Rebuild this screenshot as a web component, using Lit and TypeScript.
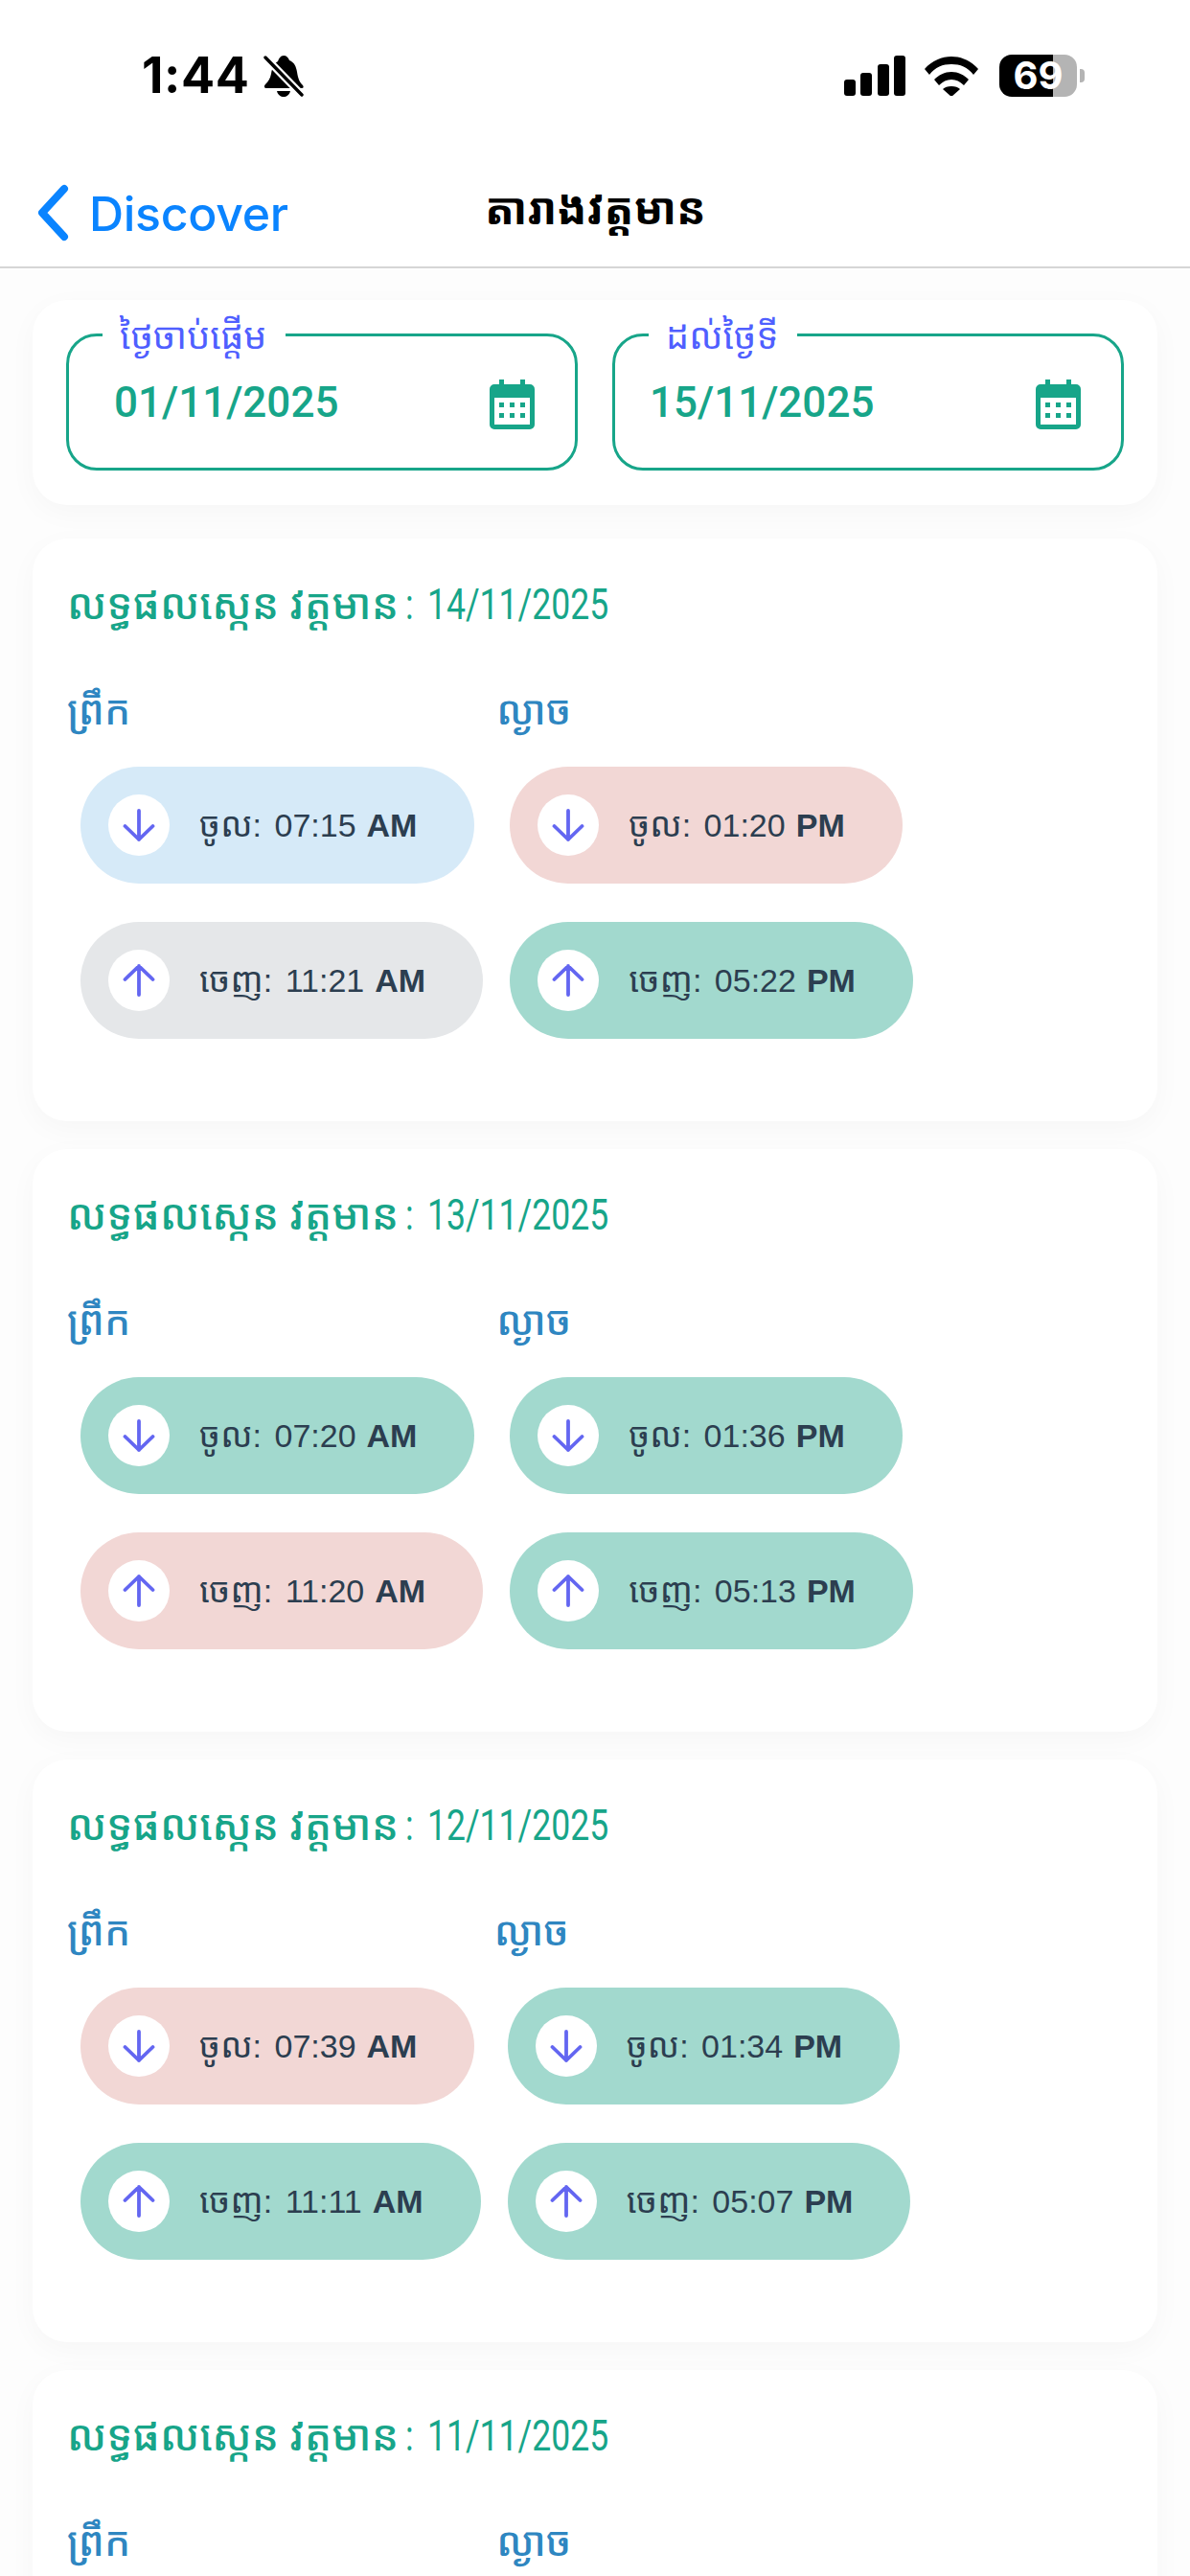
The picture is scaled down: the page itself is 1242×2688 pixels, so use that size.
import { LitElement, html, css, svg } from "lit";
import { customElement } from "lit/decorators.js";

type Tone = "pink" | "green" | "blue" | "gray";
interface Stamp { time: string; mer: string; tone: Tone; }
interface Day { date: string; am: [Stamp, Stamp]; pm: [Stamp, Stamp]; }

const s = (time: string, mer: string, tone: Tone): Stamp => ({ time, mer, tone });
const days: Day[] = [
  { date: "14/11/2025", am: [s("07:15", "AM", "blue"), s("11:21", "AM", "gray")], pm: [s("01:20", "PM", "pink"), s("05:22", "PM", "green")] },
  { date: "13/11/2025", am: [s("07:20", "AM", "green"), s("11:20", "AM", "pink")], pm: [s("01:36", "PM", "green"), s("05:13", "PM", "green")] },
  { date: "12/11/2025", am: [s("07:39", "AM", "pink"), s("11:11", "AM", "green")], pm: [s("01:34", "PM", "green"), s("05:07", "PM", "green")] },
  { date: "11/11/2025", am: [s("07:20", "AM", "green"), s("11:20", "AM", "green")], pm: [s("01:30", "PM", "green"), s("05:10", "PM", "green")] },
];

const calendar = svg`<svg class="cal" viewBox="0 0 47 52"><path fill-rule="evenodd" d="M10 0h5v5h17V0h5v5h5a5 5 0 0 1 5 5v37a5 5 0 0 1-5 5H5a5 5 0 0 1-5-5V10a5 5 0 0 1 5-5h5zM5 19v28h37V19zM10 24h5v5h-5zM21 24h5v5h-5zM32 24h5v5h-5zM10 35h5v5h-5zM21 35h5v5h-5zM32 35h5v5h-5z"/></svg>`;

@customElement("app-root")
export class AppRoot extends LitElement {
  static styles = css`
    :host { display: block; width: 1242px; height: 2688px; overflow: hidden; background: #fdfdfd; font-family: "Liberation Sans", "Noto Sans", sans-serif; }
    .head { background: #fff; height: 278px; display: flex; flex-direction: column; border-bottom: 2px solid #d6d6d6; box-sizing: content-box; }
    .status { height: 160px; display: flex; align-items: flex-start; padding: 57px 109px 0 148px; box-sizing: border-box; }
    .time { font: 700 52px/44px Inter, sans-serif; color: #000; letter-spacing: .6px; }
    .bell { width: 44px; height: 44px; margin-left: 13px; }
    .spacer { flex: 1; }
    .signal { width: 64px; height: 42px; margin-top: 1px; }
    .wifi { width: 56px; height: 42px; margin: 1px 22px 0 20px; }
    .battery { width: 90px; height: 44px; display: flex; align-items: center; }
    .cell { width: 81px; height: 44px; border-radius: 13px; background: linear-gradient(90deg, #000 69%, #b4b4b4 69%); color: #fff; font: 700 40px/44px Inter, sans-serif; text-align: center; }
    .nub { width: 5px; height: 14px; margin-left: 3px; background: #b4b4b4; border-radius: 0 4px 4px 0; }
    .nav { display: flex; align-items: center; height: 118px; padding-left: 37px; position: relative; }
    .chev { width: 36px; height: 60px; margin-top: 6px; }
    .back { font: 500 50px/60px Inter, sans-serif; color: #0a84ff; margin-left: 20px; margin-top: 8px; letter-spacing: -.3px; }
    .title { position: absolute; left: 506px; top: 26px; font: 700 45.5px/60px "Noto Sans Khmer", Khmer, "Liberation Sans", sans-serif; color: #000; }
    main { padding: 33px 34px 0; display: flex; flex-direction: column; }
    .card { background: #fff; border-radius: 36px; box-shadow: 0 8px 30px rgba(0,0,0,.03); }
    .filter { height: 214px; padding: 35px; display: grid; grid-template-columns: 534px 534px; gap: 36px; box-sizing: border-box; margin-bottom: 35px; }
    .field { height: 143px; border: 3px solid #17a589; border-radius: 32px; box-sizing: border-box; position: relative; display: flex; justify-content: space-between; padding: 44px 42px 0 47px; }
    .field.b { padding-left: 36px; }
    .legend { position: absolute; left: 35px; top: -26px; background: #fff; padding: 0 20px 0 18px; font: 400 38px/48px "Noto Sans Khmer", Khmer, "Liberation Sans", sans-serif; color: #4f5fff; }
    .date { font: 500 44px/50px Roboto, sans-serif; color: #17a589; }
    .cal { width: 47px; height: 52px; fill: #17a589; margin-top: 1px; }
    .day { height: 608px; padding: 37px 36px 0; box-sizing: border-box; margin-bottom: 29px; flex: none; }
    .heading { font: 400 44px/60px "Noto Sans Khmer", Khmer, "Liberation Sans", sans-serif; color: #17a589; height: 60px; white-space: nowrap; }
    .heading b { font-weight: 500; }
    .heading span { display: inline-block; font: 400 45px/60px Roboto, sans-serif; word-spacing: 7px; margin-left: -5px; transform: scaleX(.79); transform-origin: left center; }
    .cols { display: flex; margin-top: 51px; }
    .col { display: flex; flex-direction: column; align-items: flex-start; }
    .label { font: 500 42px/60px "Noto Sans Khmer", Khmer, "Liberation Sans", sans-serif; color: #2e86c1; height: 60px; margin-bottom: 30px; }
    .pill { height: 122px; border-radius: 61px; margin: 0 14px 40px; padding: 0 60px 0 29px; display: flex; align-items: center; color: #2c3e50; font-size: 34px; white-space: nowrap; box-sizing: border-box; }
    .pink { background: #f2d7d5; } .green { background: #a2d9ce; } .blue { background: #d6eaf8; } .gray { background: #e5e7e9; }
    .dot { width: 64px; height: 64px; border-radius: 50%; background: #fff; display: flex; align-items: center; justify-content: center; margin-right: 31px; flex: none; }
    .dot svg { width: 34px; height: 34px; fill: none; stroke: #6366f1; stroke-width: 3.8; stroke-linecap: round; stroke-linejoin: round; }
    .km { font: 36px/1 "Noto Sans Khmer", Khmer, "Liberation Sans", sans-serif; }
    .colon { margin-right: 4px; }
    .pill b { margin-left: 11px; }
  `;

  private pill(k: string, st: Stamp, up: boolean) {
    return html`<div class="pill ${st.tone}">
      <span class="dot"><svg viewBox="0 0 34 34">${up
        ? svg`<path d="M17 32V2M2.500 16 17 2l14.500 14"/>`
        : svg`<path d="M17 2v30M2.500 18 17 32l14.500-14"/>`}</svg></span>
      <span><span class="km">${k}</span><span class="colon">:</span> ${st.time}<b>${st.mer}</b></span>
    </div>`;
  }

  private col(label: string, st: [Stamp, Stamp]) {
    return html`<div class="col"><div class="label">${label}</div>
      ${this.pill("ចូល", st[0], false)}${this.pill("ចេញ", st[1], true)}</div>`;
  }

  render() {
    return html`
      <div class="head">
        <div class="status">
          <span class="time">1:44</span>
          <svg class="bell" viewBox="0 0 44 44"><path d="M22 1c3 0 5 2 6 5 5 2 7 6 8 12 1 6 2 10 6 14 1 1 1 3-1 3H4c-2 0-3-2-1-4 3-3 5-6 6-11 1-6 3-11 7-13 1-3 3-6 6-6z"/><path d="M15 38h14c-1 4-4 6-7 6s-6-2-7-6z"/><path d="M3 3l38 39" stroke="#fff" stroke-width="8"/><path d="M3 3l38 39" stroke="#000" stroke-width="3.4" stroke-linecap="round"/></svg>
          <span class="spacer"></span>
          <svg class="signal" viewBox="0 0 64 42"><rect x="0" y="25" width="12" height="17" rx="3"/><rect x="17" y="18" width="12" height="24" rx="3"/><rect x="35" y="9" width="12" height="33" rx="3"/><rect x="52" y="0" width="12" height="42" rx="3"/></svg>
          <svg class="wifi" viewBox="0 0 56 42"><path d="M0 14C8 5 18 1 28 1s20 4 28 13l-5 6C45 12 37 9 28 9S11 12 5 20z"/><path d="M10 25c5-5 11-8 18-8s13 3 18 8l-5 6c-4-4-8-6-13-6s-9 2-13 6z"/><path d="M19 35c2-2 5-3 9-3s7 1 9 3l-9 8z"/></svg>
          <span class="battery"><span class="cell">69</span><span class="nub"></span></span>
        </div>
        <div class="nav">
          <svg class="chev" viewBox="0 0 36 60"><path d="M30 5 7 30l23 25" fill="none" stroke="#0a84ff" stroke-width="8" stroke-linecap="round" stroke-linejoin="round"/></svg>
          <span class="back">Discover</span>
          <span class="title">តារាងវត្តមាន</span>
        </div>
      </div>
      <main>
        <div class="card filter">
          <div class="field"><span class="legend">ថ្ងៃចាប់ផ្តើម</span><span class="date">01/11/2025</span>${calendar}</div>
          <div class="field b"><span class="legend">ដល់ថ្ងៃទី</span><span class="date">15/11/2025</span>${calendar}</div>
        </div>
        ${days.map((d) => html`<div class="card day">
          <div class="heading"><b>លទ្ធផលស្កេន វត្តមាន</b> <span>: ${d.date}</span></div>
          <div class="cols">${this.col("ព្រឹក", d.am)}${this.col("ល្ងាច", d.pm)}</div>
        </div>`)}
      </main>`;
  }
}
